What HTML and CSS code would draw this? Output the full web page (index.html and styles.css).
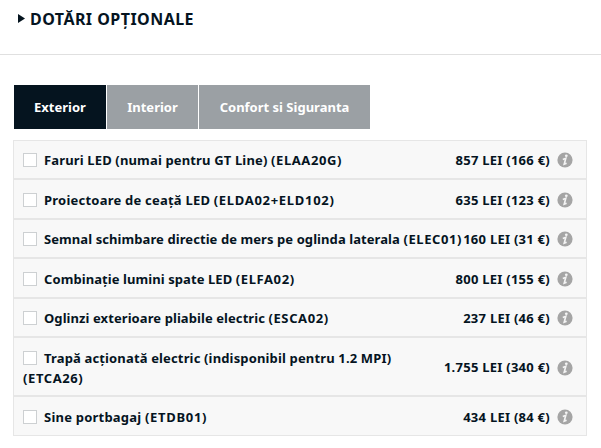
FILE: index.html
```html
<!DOCTYPE html>
<html lang="ro">
<head>
<meta charset="utf-8">
<title>Dotări opționale</title>
<link rel="stylesheet" href="styles.css">
</head>
<body>
<svg class="symbols" aria-hidden="true">
  <symbol id="info" viewBox="0 0 16 16">
    <circle cx="8" cy="8" r="7.6" fill="#a5a5a5"/>
    <ellipse cx="9.3" cy="3.7" rx="1.4" ry="1.2" fill="#f4f4f4"/>
    <path d="M5.8 7.4 8.8 6.3 7.2 12.2 9.6 11.2" fill="none" stroke="#f4f4f4" stroke-width="1.6"/>
  </symbol>
</svg>
<header class="heading">
  <svg class="arrow" viewBox="0 0 7 9"><path d="M0 0 7 4.5 0 9Z" fill="#05141f"/></svg>
  <h1>DOTĂRI OPȚIONALE</h1>
</header>
<main>
  <nav class="tabs">
    <a class="tab tab-exterior active">Exterior</a>
    <a class="tab tab-interior">Interior</a>
    <a class="tab tab-comfort">Confort si Siguranta</a>
  </nav>
  <div class="options">
    <div class="row"><label class="name loose"><i class="box"></i><span>Faruri LED (numai pentru GT Line) <span class="code">(ELAA20G)</span></span></label><span class="price">857 LEI (166 €)</span><svg class="info"><use href="#info"/></svg></div>
    <div class="row tall"><label class="name looser"><i class="box"></i><span>Proiectoare de ceață LED <span class="code">(ELDA02+ELD102)</span></span></label><span class="price">635 LEI (123 €)</span><svg class="info"><use href="#info"/></svg></div>
    <div class="row"><label class="name"><i class="box"></i><span>Semnal schimbare directie de mers pe oglinda laterala <span class="code">(ELEC01)</span></span></label><span class="price">160 LEI (31 €)</span><svg class="info"><use href="#info"/></svg></div>
    <div class="row tall"><label class="name"><i class="box"></i><span>Combinație lumini spate LED <span class="code">(ELFA02)</span></span></label><span class="price">800 LEI (155 €)</span><svg class="info"><use href="#info"/></svg></div>
    <div class="row"><label class="name"><i class="box"></i><span>Oglinzi exterioare pliabile electric <span class="code">(ESCA02)</span></span></label><span class="price">237 LEI (46 €)</span><svg class="info"><use href="#info"/></svg></div>
    <div class="row double"><label class="name loose"><i class="box"></i><span>Trapă acționată electric (indisponibil pentru 1.2 MPI)<br><span class="code">(ETCA26)</span></span></label><span class="price">1.755 LEI (340 €)</span><svg class="info"><use href="#info"/></svg></div>
    <div class="row last"><label class="name looser"><i class="box"></i><span>Sine portbagaj <span class="code">(ETDB01)</span></span></label><span class="price">434 LEI (84 €)</span><svg class="info"><use href="#info"/></svg></div>
  </div>
</main>
</body>
</html>
```
FILE: styles.css
```css
* { box-sizing: border-box; }
body {
  margin: 0;
  background: #fff;
  color: #05141f;
  font: 700 13px/20px "Noto Sans", sans-serif;
}
.symbols { display: none; }
.heading {
  display: flex;
  align-items: center;
  height: 55px;
  padding: 0 0 17px 18px;
  border-bottom: 1px solid #e0e0e0;
}
.arrow { width: 7px; height: 9px; margin-right: 5px; }
h1 { margin: 0; font-size: 16px; font-weight: 700; line-height: 24px; letter-spacing: 0.46px; }
main { padding: 30px 14px 0 13px; }
.tabs { display: flex; gap: 1px; margin-left: 1px; height: 44px; }
.tab {
  display: flex;
  align-items: center;
  justify-content: center;
  background: #9ba0a4;
  color: #fff;
  white-space: nowrap;
}
.tab-exterior { width: 92px; }
.tab-interior { width: 91px; }
.tab-comfort { width: 171px; }
.tab.active { background: #05141f; }
.options {
  width: 574px;
  margin-top: 11px;
  border: 1px solid #e6e6e6;
}
.row {
  display: flex;
  align-items: center;
  height: 39px;
  padding: 0 13px 0 9px;
  background: #f8f8f8;
  border-bottom: 2px solid #e6e6e6;
}
.row.tall { height: 40px; padding-top: 1px; }
.row.double { height: 59px; padding-top: 1px; }
.row.double .name { padding-top: 1px; }
.row.last { height: 38px; padding-top: 1px; border-bottom: 0; }
.name { flex: 1; min-width: 0; white-space: nowrap; letter-spacing: 0.08px; }
.name.loose { letter-spacing: 0.15px; }
.name.looser { letter-spacing: 0.22px; }
.code { letter-spacing: 0.6px; }
.looser .code { letter-spacing: 0.7px; }
.box {
  display: inline-block;
  width: 14px;
  height: 14px;
  margin-right: 7px;
  vertical-align: -2px;
  background: #fff;
  border: 1px solid #cdd0d2;
}
.price { white-space: nowrap; letter-spacing: 0.26px; }
.info { flex: none; width: 16px; height: 16px; margin: 1px 0 0 7px; }
```
